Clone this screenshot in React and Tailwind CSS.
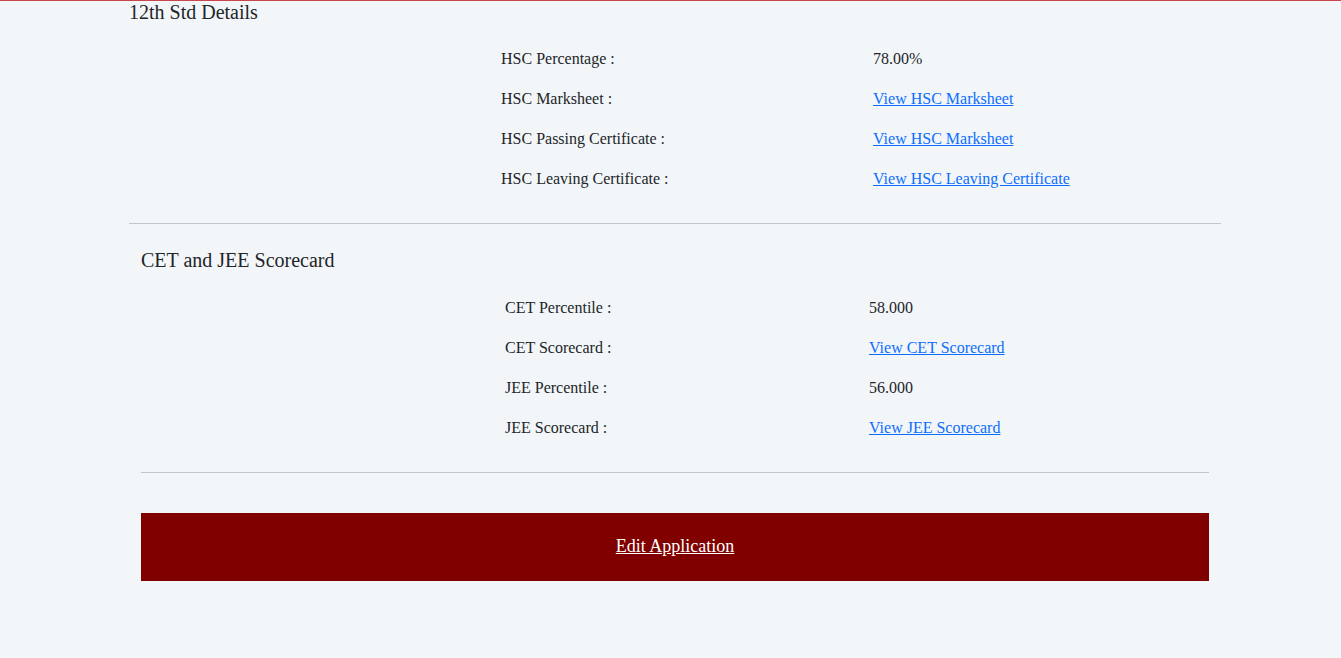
import React from "react";

const Row = ({ label, value, link }) => (
  <div className="grid grid-cols-3 h-10 leading-10 text-[16px]">
    <div />
    <div className="pl-2">{label}</div>
    <div className="pl-4">
      {link ? (
        <a href="#" className="text-[#0d6efd] underline">{value}</a>
      ) : (
        value
      )}
    </div>
  </div>
);

export default function App() {
  return (
    <div
      className="min-h-[658px] bg-[#f3f6f8] border-t border-[#c9474b] text-[#212529]"
      style={{ fontFamily: '"Liberation Serif", "Times New Roman", serif' }}
    >
      <div className="ml-[129px] w-[1092px]">
        <div className="text-[20px] h-[22px] leading-[22px]">12th Std Details</div>
        <div className="mt-[16px]">
          <Row label="HSC Percentage :" value="78.00%" />
          <Row label="HSC Marksheet :" value="View HSC Marksheet" link />
          <Row label="HSC Passing Certificate :" value="View HSC Marksheet" link />
          <Row label="HSC Leaving Certificate :" value="View HSC Leaving Certificate" link />
        </div>
        <div className="mt-[24px] border-t border-[#c4c6c8]" />
      </div>
      <div className="ml-[141px] w-[1068px]">
        <div className="mt-[24px] text-[20px] h-6 leading-6">CET and JEE Scorecard</div>
        <div className="mt-[16px]">
          <Row label="CET Percentile :" value="58.000" />
          <Row label="CET Scorecard :" value="View CET Scorecard" link />
          <Row label="JEE Percentile :" value="56.000" />
          <Row label="JEE Scorecard :" value="View JEE Scorecard" link />
        </div>
        <div className="mt-[24px] border-t border-[#c4c6c8]" />
        <div className="mt-[40px] h-[68px] pb-[2px] bg-[#800000] flex items-center justify-center">
          <a href="#" className="text-white underline text-[18px]">Edit Application</a>
        </div>
      </div>
    </div>
  );
}
